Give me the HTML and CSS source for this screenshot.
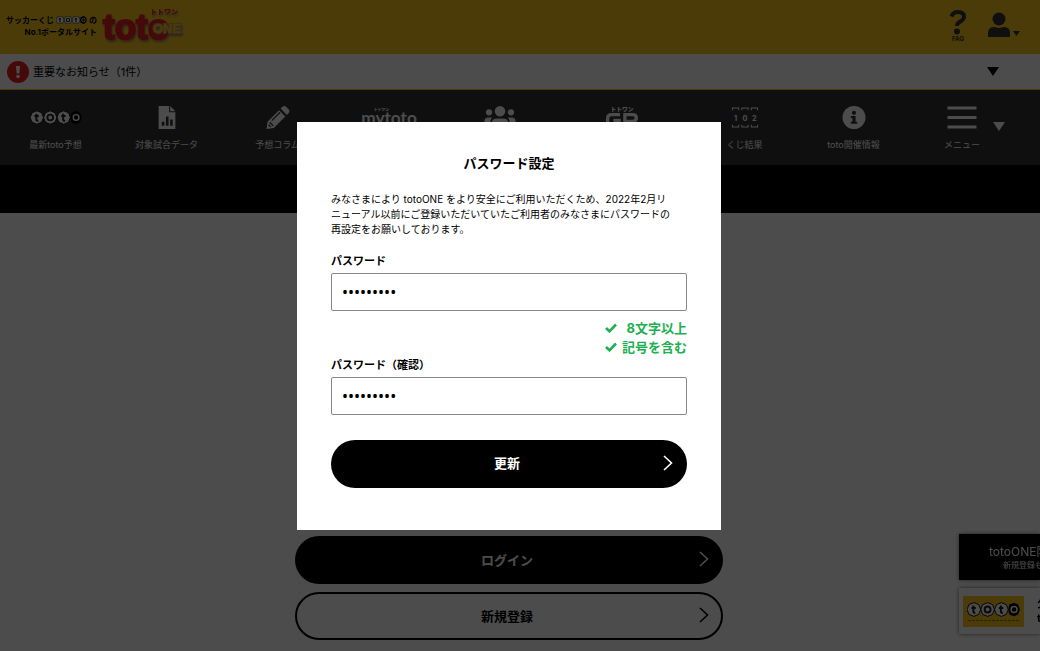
FILE: index.html
```html
<!DOCTYPE html>
<html lang="ja">
<head>
<meta charset="utf-8">
<meta name="viewport" content="width=device-width, initial-scale=1">
<title>パスワード設定 | totoONE</title>
<link rel="stylesheet" href="styles.css">
</head>
<body>
<svg width="0" height="0" class="defs" aria-hidden="true">
  <symbol id="balls" viewBox="0 0 54 14">
    <path d="M7 0l5 2 2 5-2 5-5 2-5-2-2-5 2-5zM21 0l5 2 2 5-2 5-5 2-5-2-2-5 2-5zM35 0l5 2 2 5-2 5-5 2-5-2-2-5 2-5z" fill="#fff" stroke="#111" stroke-width="1"/>
    <path d="M48 0l4 2 2 5-2 5-4 2-5-2-1-5 1-5z" fill="#000"/>
    <circle cx="21" cy="7" r="3" fill="none" stroke="#222" stroke-width="2"/>
    <circle cx="48" cy="7" r="3" fill="none" stroke="#fff" stroke-width="1.5"/>
    <path d="M6.500 3v6q0 1.500 2 1.500M4.500 5.500h4.500M34.500 3v6q0 1.500 2 1.500M32.500 5.500h4.500" fill="none" stroke="#222" stroke-width="2"/>
  </symbol>
  <symbol id="chevron" viewBox="0 0 10 16"><path d="M1 1l7.500 7L1 15" fill="none" stroke="currentColor" stroke-width="1.600"/></symbol>
  <symbol id="check" viewBox="0 0 12 10"><path d="M1 5l3.500 3.300L11 1.500" fill="none" stroke="currentColor" stroke-width="2.600"/></symbol>
</svg>

<header class="header">
  <a class="brand" href="#">
    <span class="tagline">
      <span class="tagline-top">サッカーくじ<svg class="tagline-balls" aria-hidden="true"><use href="#balls"/></svg>の</span>
      <span class="tagline-bottom">No.1ポータルサイト</span>
    </span>
    <svg class="logo" viewBox="0 0 82 38" role="img" aria-label="toto ONE">
      <text x="1" y="33" class="logo-word">toto</text>
      <text x="51" y="27" class="logo-one">ONE</text>
      <text x="48" y="8" class="logo-kana">トトワン</text>
    </svg>
  </a>
  <div class="header-tools">
    <a class="faq" href="#">
      <svg class="faq-icon" viewBox="0 0 18 25" aria-hidden="true"><path d="M2.500 6.500Q4 2 9 2q6 0 6 4.800 0 2.700-3.500 4.600-3.500 1.800-3.500 4.600" fill="none" stroke="#333" stroke-width="4"/><circle cx="8" cy="21.500" r="3" fill="#333"/></svg>
      <span class="faq-label">FAQ</span>
    </a>
    <button class="account" type="button" aria-label="アカウント">
      <svg class="account-icon" viewBox="0 0 32 26" aria-hidden="true"><circle cx="11" cy="7" r="6.500" fill="#333"/><path d="M0 25v-4q0-6 6-6h1q4 2 8 0h1q6 0 6 6v4z" fill="#333"/><path d="M25 19h7l-3.500 5z" fill="#333"/></svg>
    </button>
  </div>
</header>

<button class="notice" type="button">
  <svg class="notice-icon" viewBox="0 0 22 22" aria-hidden="true"><circle cx="11" cy="11" r="11" fill="#e62020"/><path d="M9 5h4l-.700 7.500h-2.600z" fill="#fff"/><circle cx="11" cy="15.500" r="1.800" fill="#fff"/></svg>
  <span class="notice-text">重要なお知らせ（1件）</span>
  <svg class="triangle" viewBox="0 0 12 9" aria-hidden="true"><path d="M0 0h12L6 9z" fill="#000"/></svg>
</button>

<nav class="nav">
  <a class="nav-item" href="#"><svg class="nav-icon" viewBox="-1 -5 56 24"><use href="#balls" width="54" height="14"/></svg><span>最新toto予想</span></a>
  <a class="nav-item" href="#"><svg class="nav-icon" viewBox="0 0 16 22"><path d="M0 0h10v6h6v16H0zM11 0l5 5h-5z" fill="#fff"/><path d="M3 15h2.500v4H3zM7 10h2.500v9H7zM11 13h2.500v6H11z" fill="#333"/></svg><span>対象試合データ</span></a>
  <a class="nav-item" href="#"><svg class="nav-icon" viewBox="0 0 22 22"><path d="M0 22l1-7L12 4l6 6L7 21zM13.500 2.500L15 1q2-2 4 0l2 2q2 2 0 4l-1.500 1.500z" fill="#fff"/><path d="M3 15.500l3.500 3.500M5 14l8-8M2 18l2 2" stroke="#333" stroke-width="1.200"/></svg><span>予想コラム</span></a>
  <a class="nav-item" href="#"><svg class="nav-icon" viewBox="0 0 60 24"><text x="30" y="19" class="mytoto">mytoto</text><text x="22" y="5" class="mytoto-ruby">トトワン</text></svg><span>マイtoto</span></a>
  <a class="nav-item" href="#"><svg class="nav-icon" viewBox="0 0 30 22"><g fill="#fff"><circle cx="15" cy="5" r="5"/><circle cx="4.500" cy="6" r="3"/><circle cx="25.500" cy="6" r="3"/><path d="M7 22v-5q0-5 5-5h6q5 0 5 5v5zM0 17v-2q0-4 4-4h3.500q-2 2-2 6zM30 17v-2q0-4-4-4h-3.500q2 2 2 6z"/></g></svg><span>コミュニティ</span></a>
  <a class="nav-item" href="#"><svg class="nav-icon" viewBox="0 0 34 24"><text x="17" y="5" class="gp-ruby">トトワン</text><path d="M15 9H6q-4 0-4 4v4q0 4 4 4h8v-6H8M20 24V9h8q4 0 4 3.500T28 16h-8" fill="none" stroke="#fff" stroke-width="3.500"/></svg><span>トトワンGP</span></a>
  <a class="nav-item" href="#"><svg class="nav-icon" viewBox="0 0 26 22"><path d="M1 4V2h6v2M10 4V2h6v2M19 4V2h6v2M1 18v2h6v-2M10 18v2h6v-2M19 18v2h6v-2" fill="none" stroke="#fff" stroke-width="1"/><text x="4" y="14" class="lot">1</text><text x="13" y="14" class="lot">0</text><text x="22" y="14" class="lot">2</text></svg><span>くじ結果</span></a>
  <a class="nav-item" href="#"><svg class="nav-icon" viewBox="0 0 22 22"><circle cx="11" cy="11" r="11" fill="#fff"/><circle cx="11" cy="6.500" r="2" fill="#333"/><path d="M8 9.500h4.500V15H14v2H8v-2h1.500v-3.500H8z" fill="#333"/></svg><span>toto開催情報</span></a>
  <a class="nav-item nav-menu" href="#"><svg class="nav-icon" viewBox="0 0 29 23"><path d="M0 2h29M0 11.500h29M0 21h29" stroke="#fff" stroke-width="3"/></svg><span>メニュー</span></a>
  <svg class="triangle nav-triangle" viewBox="0 0 12 9" aria-hidden="true"><path d="M0 0h12L6 9z" fill="#fff"/></svg>
</nav>
<div class="band"></div>

<main class="main">
  <button class="pill pill-page" type="button"><span>ログイン</span><svg class="chevron" aria-hidden="true"><use href="#chevron"/></svg></button>
  <button class="pill pill-page pill-outline" type="button"><span>新規登録</span><svg class="chevron" aria-hidden="true"><use href="#chevron"/></svg></button>
</main>

<aside class="side">
  <a class="side-card side-dark" href="#"><span class="side-title">totoONE限定</span><span class="side-sub">新規登録も</span></a>
  <a class="side-card side-light" href="#">
    <svg class="side-logo" viewBox="0 0 61 31" aria-hidden="true"><path d="M0 0h61v31H0z" fill="#fac71e"/><use href="#balls" x="4" y="6" width="53" height="15"/><path d="M5 24.500h51" stroke="#947614" stroke-dasharray="3 1"/></svg>
    <span class="side-text">公式<br>toto</span>
  </a>
</aside>

<div class="overlay">
  <form class="modal" role="dialog" aria-labelledby="modal-title">
    <h1 class="modal-title" id="modal-title">パスワード設定</h1>
    <p class="modal-text">みなさまにより totoONE をより安全にご利用いただくため、2022年2月リ<br>ニューアル以前にご登録いただいていたご利用者のみなさまにパスワードの<br>再設定をお願いしております。</p>
    <label class="label" for="password">パスワード</label>
    <input class="field" id="password" type="password" value="password!" autocomplete="new-password">
    <ul class="rules">
      <li class="rule"><svg class="check" aria-hidden="true"><use href="#check"/></svg><span class="rule-text">8文字以上</span></li>
      <li class="rule"><svg class="check" aria-hidden="true"><use href="#check"/></svg><span class="rule-text">記号を含む</span></li>
    </ul>
    <label class="label" for="confirm">パスワード（確認）</label>
    <input class="field" id="confirm" type="password" value="password!" autocomplete="new-password">
    <button class="pill pill-submit" type="submit"><span>更新</span><svg class="chevron" aria-hidden="true"><use href="#chevron"/></svg></button>
  </form>
</div>
</body>
</html>
```
FILE: styles.css
```css
* { box-sizing: border-box; }

body {
  margin: 0;
  min-height: 100vh;
  display: flex;
  flex-direction: column;
  overflow: hidden;
  background: #fff;
  color: #000;
  font-family: Inter, "Noto Sans CJK JP", sans-serif;
  font-size: 11px;
}

a { color: inherit; text-decoration: none; }
button { font-family: inherit; border: 0; margin: 0; cursor: pointer; }
.defs { position: absolute; }

.header {
  height: 54px;
  padding: 0 20px 0 6px;
  display: flex;
  justify-content: space-between;
  background: #fac71e;
}

.brand { display: flex; gap: 5px; padding-top: 6px; }
.tagline {
  display: flex;
  flex-direction: column;
  align-items: flex-end;
  padding-top: 8px;
  font-size: 8px;
  font-weight: 700;
  line-height: 12px;
  white-space: nowrap;
}
.tagline-top { display: flex; align-items: center; gap: 2px; }
.tagline-balls { width: 31px; height: 8px; }
.logo { width: 82px; height: 38px; overflow: visible; filter: drop-shadow(1px 2px 1px #8a7a60); }
.logo-word { font: 700 35px "Liberation Sans", sans-serif; fill: #e62020; stroke: #e62020; stroke-width: 2; }
.logo-one { font: 700 13px "Liberation Sans", sans-serif; fill: #fac71e; stroke: #c8a060; stroke-width: 2; paint-order: stroke; }
.logo-kana { font: 900 7px "Noto Sans CJK JP", sans-serif; fill: #e62020; }

.header-tools { display: flex; gap: 21px; padding-top: 10px; }
.faq { display: flex; flex-direction: column; align-items: center; }
.faq-icon { width: 18px; height: 25px; }
.faq-label { font-size: 6px; font-weight: 700; line-height: 8px; color: #333; }
.account { align-self: flex-start; padding: 2px 0 0; background: none; }
.account-icon { display: block; width: 32px; height: 26px; }

.notice {
  height: 36px;
  padding: 0 41px 0 7px;
  display: flex;
  align-items: center;
  gap: 4px;
  background: #fff;
  border-bottom: 1px solid #fac71e;
  color: #000;
  font-size: 11px;
}
.notice-icon { width: 22px; height: 22px; }
.notice-text { flex: 1; padding-bottom: 2px; text-align: left; }
.triangle { width: 12px; height: 9px; }

.nav {
  height: 75px;
  display: grid;
  grid-template-columns: 111fr 111fr 111fr 111fr 111fr 133fr 113fr 105fr 87fr 25fr 22fr;
  background: #333;
  color: #fff;
  font-size: 9px;
}
.nav-item {
  grid-row: 1;
  min-width: 0;
  display: flex;
  flex-direction: column;
  align-items: center;
  gap: 9px;
  padding-top: 16px;
  line-height: 14px;
  white-space: nowrap;
}
.nav-icon { height: 23px; width: 60px; }
.nav-menu { grid-column: 9 / 11; }
.nav-triangle { grid-row: 1; grid-column: 10; margin-top: 32px; }
.mytoto { font: 700 18px Lato, sans-serif; fill: #fff; text-anchor: middle; }
.mytoto-ruby, .gp-ruby { font: 900 4px "Noto Sans CJK JP", sans-serif; fill: #fff; text-anchor: middle; }
.gp-ruby { font-size: 6px; }
.lot { font: 700 7px Inter, sans-serif; fill: #fff; text-anchor: middle; }

.band { height: 48px; background: #000; }

.main {
  flex: 1;
  display: flex;
  flex-direction: column;
  align-items: center;
  justify-content: flex-end;
  gap: 8px;
  padding: 0 22px 11px 0;
}

.pill {
  position: relative;
  height: 48px;
  display: flex;
  align-items: center;
  justify-content: center;
  padding: 0 4px 2px 0;
  border-radius: 24px;
  background: #000;
  color: #fff;
  font-size: 13px;
  font-weight: 700;
}
.pill-page { width: 428px; }
.pill-outline { background: #fff; color: #000; border: 2px solid #000; }
.pill-submit { width: 100%; margin-top: 25px; }
.chevron { position: absolute; right: 14px; width: 10px; height: 16px; }
.pill-outline .chevron { right: 12px; }

.side {
  position: fixed;
  right: 0;
  bottom: 17px;
  width: 81px;
  display: flex;
  flex-direction: column;
  gap: 8px;
}
.side-card { height: 46px; overflow: hidden; white-space: nowrap; box-shadow: 0 0 4px #777; }
.side-dark { display: flex; flex-direction: column; padding: 11px 0 0 30px; background: #000; color: #fff; }
.side-title { font-size: 12px; line-height: 14px; }
.side-sub { padding-left: 14px; font-size: 8px; line-height: 13px; }
.side-light { display: flex; align-items: center; gap: 13px; padding-left: 4px; background: #fff; }
.side-logo { flex: none; width: 61px; height: 31px; }
.side-text { font-size: 11px; font-weight: 700; line-height: 14px; }

.overlay {
  position: fixed;
  inset: 0;
  display: flex;
  align-items: center;
  justify-content: center;
  padding-right: 22px;
  background: rgba(0, 0, 0, 0.7);
}
.modal { width: 424px; padding: 32px 34px 42px; background: #fff; }
.modal-title { margin: 0 0 20px; font-size: 13px; line-height: 18px; text-align: center; }
.modal-text { margin: 0 0 16px; font-size: 10px; line-height: 15px; white-space: nowrap; }
.label { display: block; margin-bottom: 4px; font-size: 11px; font-weight: 700; line-height: 16px; }
.field {
  display: block;
  width: 100%;
  height: 38px;
  padding: 0 10px;
  border: 1px solid #888;
  border-radius: 2px;
  background: #fff;
  font: 16px "Noto Sans", sans-serif;
}
.rules {
  margin: 8px 0 0;
  padding: 0;
  list-style: none;
  color: #1eaf50;
  font-size: 13px;
  font-weight: 700;
  line-height: 19px;
}
.rule { display: flex; align-items: center; justify-content: flex-end; gap: 5px; }
.rule-text { min-width: 65px; text-align: right; }
.check { width: 12px; height: 10px; }
```
